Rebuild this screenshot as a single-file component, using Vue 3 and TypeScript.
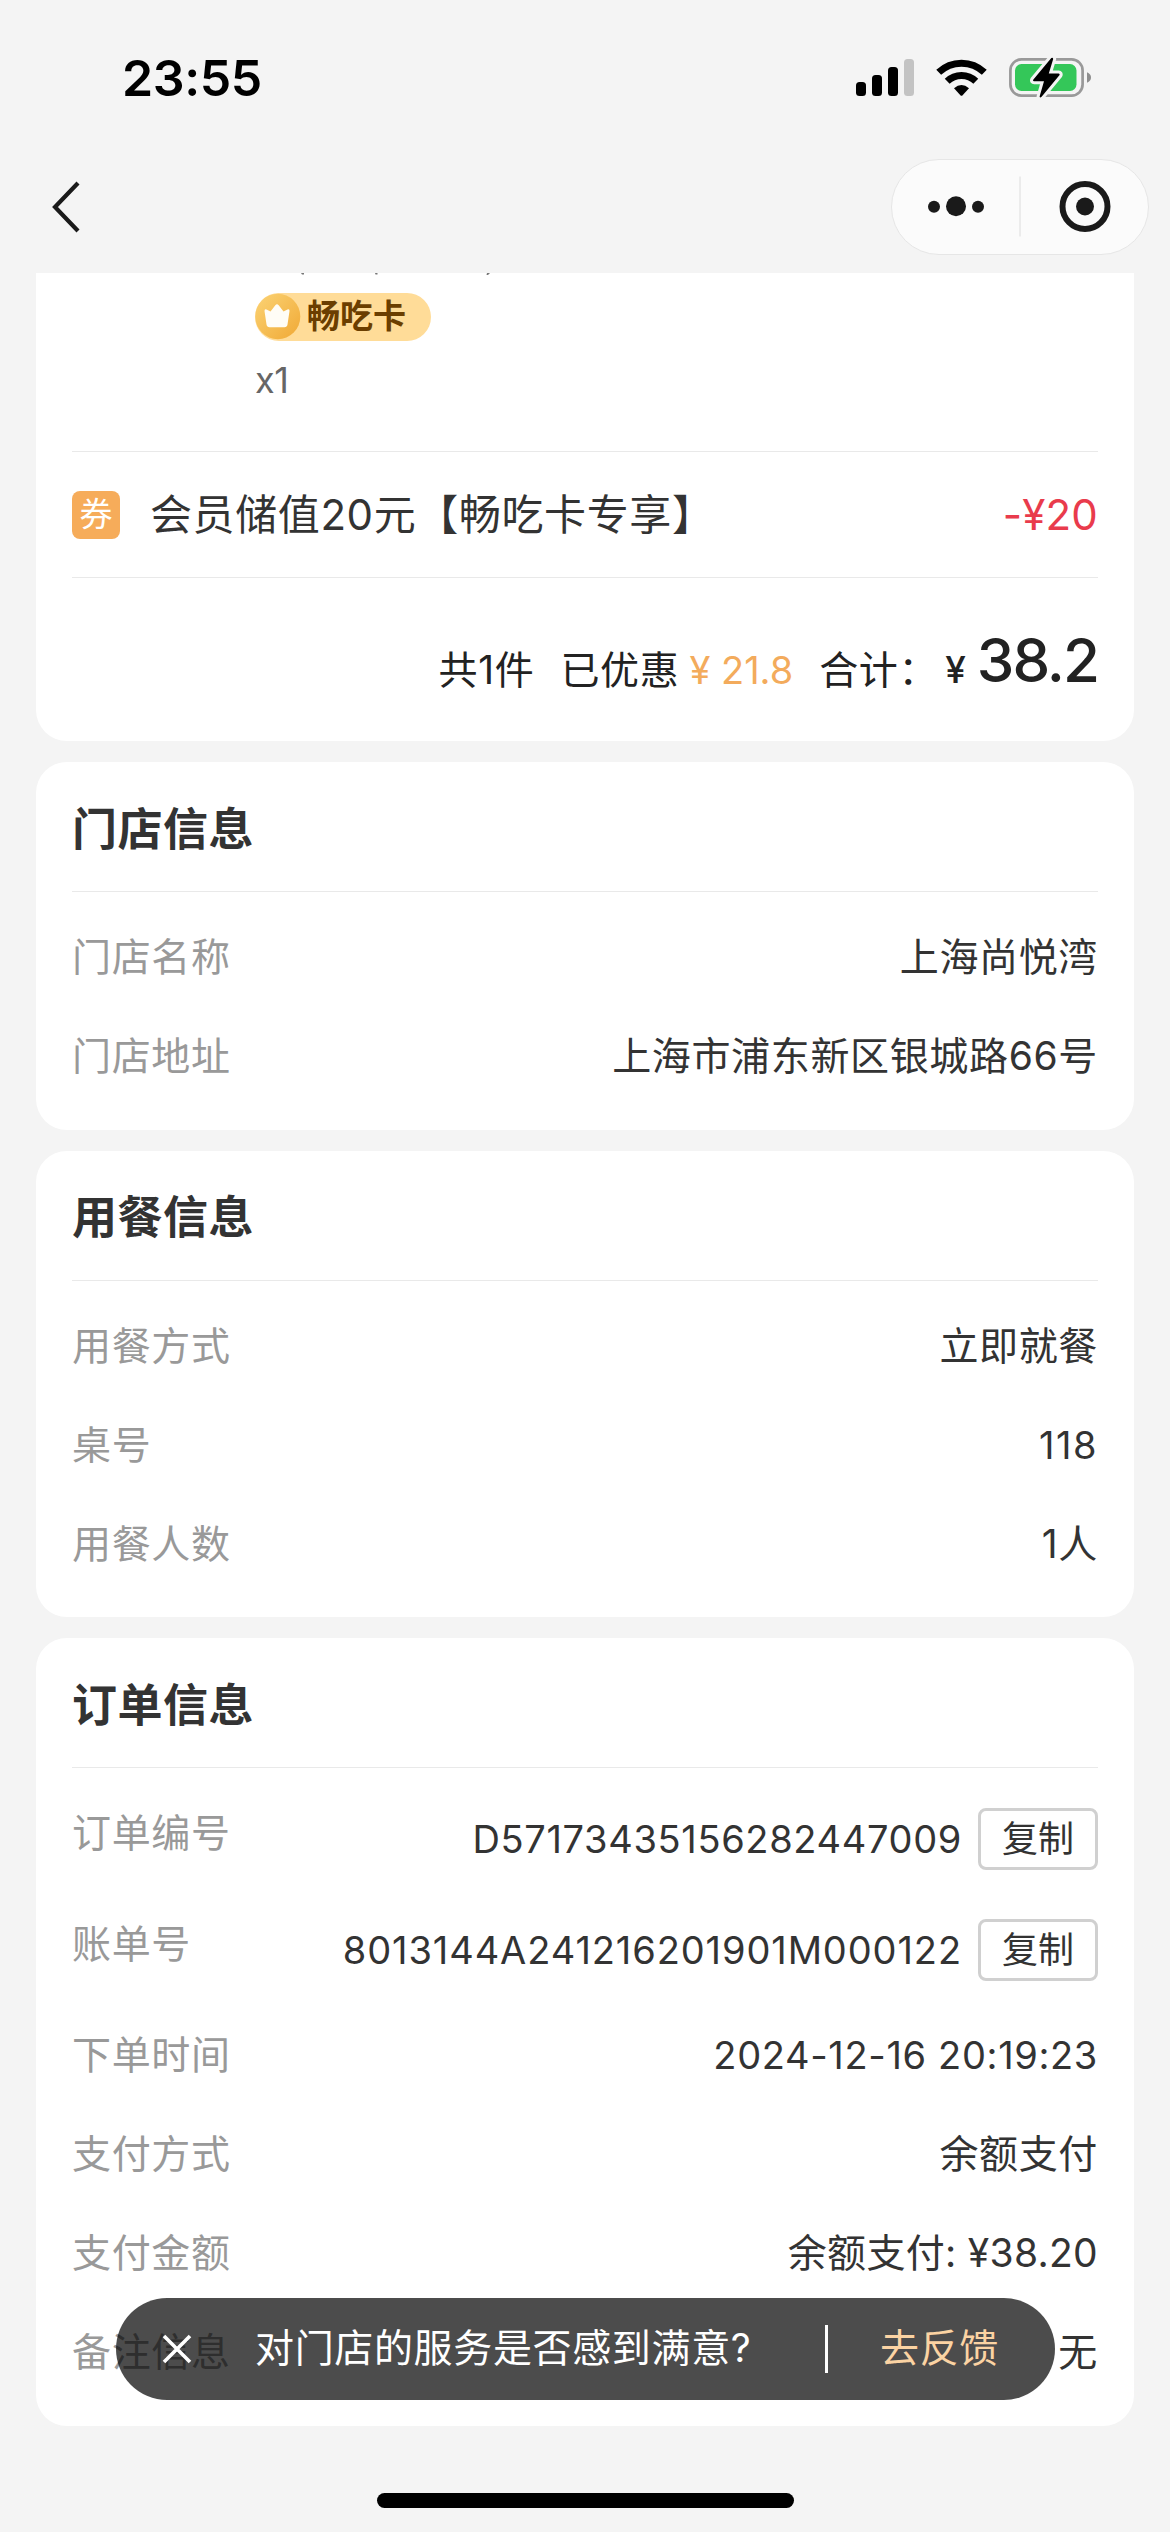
<script setup lang="ts">
interface Row {
  label: string
  value: string
  copy?: boolean
  cls?: string
}

interface Section {
  title: string
  rows: Row[]
}

const sections: Section[] = [
  {
    title: '门店信息',
    rows: [
      { label: '门店名称', value: '上海尚悦湾' },
      { label: '门店地址', value: '上海市浦东新区银城路66号' },
    ],
  },
  {
    title: '用餐信息',
    rows: [
      { label: '用餐方式', value: '立即就餐' },
      { label: '桌号', value: '118', cls: 'latin table-no' },
      { label: '用餐人数', value: '1人' },
    ],
  },
  {
    title: '订单信息',
    rows: [
      { label: '订单编号', value: 'D57173435156282447009', copy: true, cls: 'latin' },
      { label: '账单号', value: '8013144A241216201901M000122', copy: true, cls: 'latin bill' },
      { label: '下单时间', value: '2024-12-16 20:19:23', cls: 'latin' },
      { label: '支付方式', value: '余额支付' },
      { label: '支付金额', value: '余额支付: ¥38.20', cls: 'amount' },
      { label: '备注信息', value: '无' },
    ],
  },
]
</script>

<template>
  <div class="page">
    <header class="top">
      <div class="status">
        <span class="clock">23:55</span>
        <svg class="status-icons" width="240" height="44" viewBox="0 0 240 44">
          <g>
            <rect x="0" y="26" width="10" height="14" rx="3.5" />
            <rect x="16" y="19" width="10" height="21" rx="3.5" />
            <rect x="32" y="11" width="10" height="29" rx="3.5" />
            <rect x="48" y="3" width="10" height="37" rx="3.5" fill="#c3c3c3" />
          </g>
          <g fill="none" stroke="#000">
            <path d="M82.700 16.300 A33 33 0 0 1 128.300 16.300" stroke-width="7" />
            <path d="M91.200 25.200 A20.500 20.500 0 0 1 119.800 25.200" stroke-width="7" />
          </g>
          <path d="M98 32.200 Q105.500 25.800 113 32.200 L106.600 39.200 Q105.500 40.200 104.400 39.200 Z" />
          <rect x="154.400" y="3.400" width="72.200" height="36.200" rx="11" fill="none" stroke="#999" stroke-width="2.700" />
          <rect x="159" y="8" width="61.500" height="27" rx="6.500" fill="#34c759" />
          <path d="M231 16.300 Q235 18 235 21.500 Q235 25 231 26.700 Z" fill="#8e8e8e" />
          <path
            d="M195.300 2 L177.200 23.700 Q176.500 25.200 178.200 25.200 L188 25.200 L183.600 40.500 Q184 42.200 185.600 40.800 L203.600 19 Q204 17.600 202.600 17.500 L192.800 17.500 L197.200 3 Q196.800 1 195.300 2 Z"
            stroke="#f4f4f4" stroke-width="6" stroke-linejoin="round" paint-order="stroke"
          />
        </svg>
      </div>
      <div class="nav">
        <svg class="back" width="32" height="54" viewBox="0 0 32 54">
          <path d="M28 3 L5 27 L28 51" fill="none" stroke="#1a1a1a" stroke-width="4.200" />
        </svg>
        <div class="capsule">
          <svg width="256" height="94" viewBox="0 0 256 94">
            <g fill="#1a1a1a">
              <circle cx="42" cy="46.700" r="6" />
              <circle cx="64" cy="46.300" r="10" />
              <circle cx="86" cy="46.700" r="6" />
              <circle cx="193" cy="46.500" r="9" />
            </g>
            <circle cx="193" cy="46.500" r="22.500" fill="none" stroke="#1a1a1a" stroke-width="6" />
            <path d="M128 16.500 V76.500" stroke="#dcdcdc" stroke-width="1" />
          </svg>
        </div>
      </div>
    </header>

    <main class="cards">
      <section class="card goods">
        <div class="item">
          <svg class="cut" width="200" height="3" viewBox="0 0 200 3">
            <path d="M10 0 h3 v1.500 h-2 z M84 0 h2.500 v1.500 h-2 z M196 0 h3 l-2 2 h-1.500 z" fill="#777" />
          </svg>
          <div class="badge">
            <svg width="46" height="48" viewBox="0 0 46 48">
              <defs>
                <linearGradient id="coin" x1="0" y1="0" x2="1" y2="1">
                  <stop offset="0" stop-color="#fbd375" />
                  <stop offset="1" stop-color="#f0a935" />
                </linearGradient>
              </defs>
              <ellipse cx="22.800" cy="23.500" rx="22.500" ry="22.800" fill="url(#coin)" />
              <path
                d="M9.500 18 Q9.500 15.500 11.500 16.500 L15.500 18.500 L20.300 12.200 Q22 10.300 23.700 12.200 L28.500 18.500 L32.500 16.500 Q34.700 15.500 34.500 18 L32.500 31.500 Q32 34.300 29.500 34.300 L14.500 34.300 Q12 34.300 11.500 31.500 Z"
                fill="#fffdf6"
              />
            </svg>
            <span>畅吃卡</span>
          </div>
          <div class="qty">x1</div>
        </div>
        <div class="coupon">
          <span class="tag">券</span>
          <span class="coupon-name">会员储值20元【畅吃卡专享】</span>
          <span class="minus">-¥20</span>
        </div>
        <div class="total">
          <span class="count">共1件</span>
          <span class="saved">已优惠</span>
          <span class="saved-num">¥ 21.8</span>
          <span class="sum">合计：</span>
          <span class="yen">¥</span>
          <span class="price">38.2</span>
        </div>
      </section>

      <section v-for="s in sections" :key="s.title" class="card">
        <h2 class="title">{{ s.title }}</h2>
        <div class="rows">
          <div v-for="r in s.rows" :key="r.label" class="row">
            <span class="label">{{ r.label }}</span>
            <div class="value">
              <span :class="r.cls">{{ r.value }}</span>
              <button v-if="r.copy" class="copy" type="button">复制</button>
            </div>
          </div>
        </div>
      </section>
    </main>

    <div class="toast">
      <svg class="close" width="30" height="30" viewBox="0 0 30 30">
        <path d="M2 2 L28 28 M28 2 L2 28" stroke="#fff" stroke-width="3.600" />
      </svg>
      <span class="ask">对门店的服务是否感到满意?</span>
      <i class="bar"></i>
      <span class="go">去反馈</span>
    </div>
    <div class="home"></div>
  </div>
</template>

<style>
body {
  margin: 0;
  background: #f4f4f4;
}
</style>

<style scoped>
.page {
  position: relative;
  box-sizing: border-box;
  width: 1170px;
  height: 2532px;
  overflow: hidden;
  background: #f4f4f4;
  color: #333;
  font-family: Inter, "Noto Sans CJK SC", sans-serif;
  font-size: 39px;
  line-height: 50px;
  letter-spacing: 0.65px;
  white-space: nowrap;
}
.top {
  height: 273px;
}
.status {
  display: flex;
  justify-content: space-between;
  height: 159px;
  padding: 0 74px 0 122px;
}
.clock {
  margin-top: 48px;
  height: 60px;
  line-height: 60px;
  font-size: 50px;
  font-weight: 600;
  letter-spacing: -0.4px;
  color: #000;
}
.status-icons {
  margin-top: 56px;
}
.nav {
  display: flex;
  align-items: center;
  justify-content: space-between;
  height: 96px;
  padding: 0 21px 0 50px;
}
.capsule {
  width: 256px;
  height: 94px;
  border: 1px solid #e6e6e6;
  border-radius: 48px;
  background: #fbfbfb;
}
.capsule svg {
  display: block;
}
.cards {
  display: flex;
  flex-direction: column;
  gap: 21px;
  margin: 0 36px;
}
.card {
  padding: 0 36px;
  border-radius: 31px;
  background: #fff;
}
.goods {
  height: 468px;
  border-radius: 0 0 31px 31px;
}
.item {
  box-sizing: border-box;
  display: flex;
  flex-direction: column;
  align-items: flex-start;
  height: 179px;
  padding-left: 183px;
  border-bottom: 1px solid #e9e9e9;
}
.cut {
  margin-left: 36px;
}
.badge {
  display: flex;
  align-items: center;
  box-sizing: border-box;
  width: 176px;
  height: 48px;
  margin-top: 17px;
  border-radius: 24px;
  background: #ffdc98;
  color: #6b3e00;
  font-size: 33px;
  font-weight: 600;
  letter-spacing: 0;
}
.badge span {
  margin-left: 6px;
  margin-bottom: 3px;
}
.qty {
  margin-top: 14px;
  font-size: 36px;
  letter-spacing: -0.5px;
  color: #666;
}
.coupon {
  box-sizing: border-box;
  display: flex;
  align-items: center;
  height: 126px;
  border-bottom: 1px solid #e9e9e9;
  font-size: 42px;
}
.tag {
  width: 48px;
  height: 48px;
  border-radius: 8px;
  background: #f6ac5a;
  color: #fff;
  font-size: 33px;
  line-height: 46px;
  letter-spacing: 0;
  text-align: center;
}
.coupon-name {
  margin-left: 30px;
  letter-spacing: 0.6px;
}
.minus {
  margin-left: auto;
  font-size: 42px;
  letter-spacing: 0.2px;
  color: #e93b4c;
}
.total {
  display: flex;
  align-items: flex-end;
  justify-content: flex-end;
  height: 117px;
  color: #222;
}
.saved {
  margin-left: 26px;
}
.saved-num {
  margin-left: 10px;
  font-size: 38px;
  letter-spacing: 0;
  color: #f3ab5c;
}
.sum {
  margin-left: 26px;
}
.yen {
  margin-left: 7px;
  font-size: 37px;
  line-height: 51px;
  font-weight: 500;
  letter-spacing: 0;
}
.price {
  margin-left: 11px;
  font-size: 60px;
  line-height: 69px;
  font-weight: 500;
  letter-spacing: -2px;
}
.title {
  box-sizing: border-box;
  height: 130px;
  margin: 0;
  padding-top: 42.500px;
  border-bottom: 1px solid #e9e9e9;
  font-size: 45px;
  font-weight: 700;
  line-height: 50px;
  letter-spacing: 0.5px;
}
.rows {
  padding: 16px 0 23.500px;
}
.row {
  display: flex;
  align-items: flex-start;
  justify-content: space-between;
  padding: 24px 0 25px;
}
.label {
  color: #999;
}
.value {
  display: flex;
  align-items: center;
  gap: 16px;
}
.latin {
  font-size: 38px;
}
.table-no {
  letter-spacing: 1.500px;
}
.bill {
  letter-spacing: 0.9px;
}
.amount {
  letter-spacing: 0.3px;
}
.copy {
  box-sizing: border-box;
  width: 120px;
  height: 62px;
  padding: 0;
  border: 3px solid #d0d0d0;
  border-radius: 8px;
  background: #fff;
  color: #333;
  font: inherit;
  font-size: 36px;
  line-height: 50px;
  letter-spacing: 0;
}
.toast {
  position: absolute;
  left: 116px;
  top: 2298px;
  box-sizing: border-box;
  display: flex;
  align-items: center;
  width: 939px;
  height: 102px;
  padding-left: 46px;
  border-radius: 51px;
  background: rgba(0, 0, 0, 0.7);
  color: #fff;
}
.ask {
  width: 571px;
  margin-left: 63px;
  padding-bottom: 3px;
}
.bar {
  width: 3px;
  height: 48px;
  margin-left: -1px;
  background: #fff;
}
.go {
  margin-left: 52px;
  padding-bottom: 3px;
  color: #fbd3a3;
}
.home {
  position: absolute;
  left: 377px;
  top: 2493px;
  width: 417px;
  height: 15px;
  border-radius: 8px;
  background: #000;
}
</style>
